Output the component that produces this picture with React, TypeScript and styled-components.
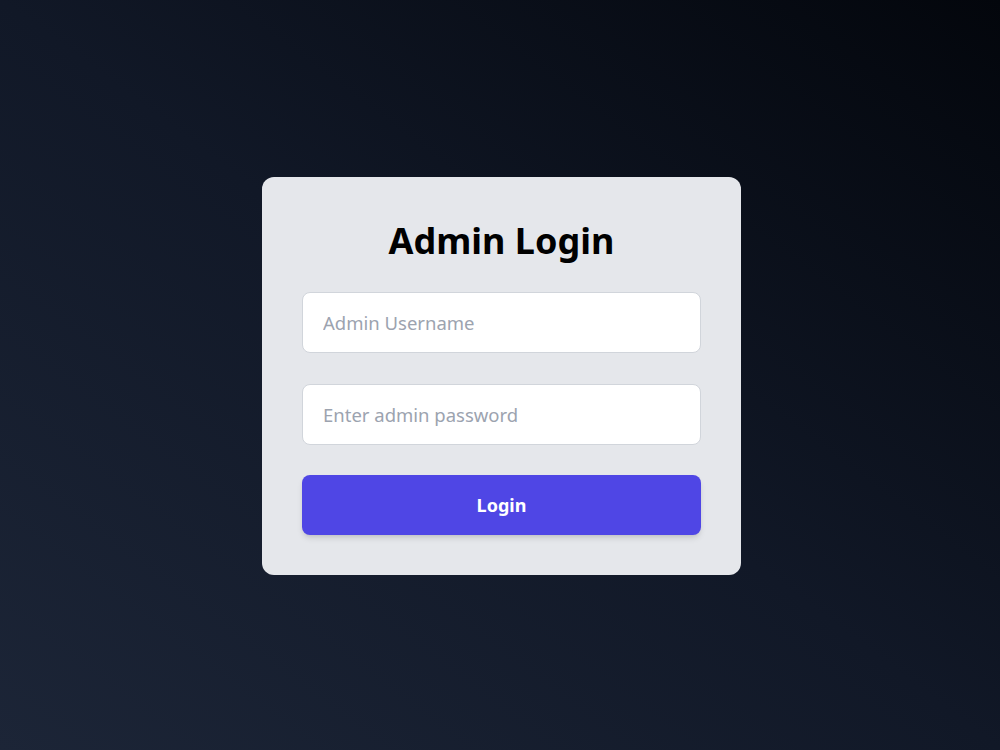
import React from "react";
import styled, { createGlobalStyle } from "styled-components";

const GlobalStyle = createGlobalStyle`
  html, body {
    margin: 0;
    padding: 0;
    height: 100%;
  }
  body {
    font-family: "Noto Sans", "Open Sans", sans-serif;
  }
  #root {
    height: 100%;
  }
  * {
    box-sizing: border-box;
  }
`;

const Page = styled.main`
  min-height: 100vh;
  padding: 2px 0 0 3px;
  display: flex;
  align-items: center;
  justify-content: center;
  background: linear-gradient(to top right, #1c2537 0%, #111827 50%, #03060c 100%);
`;

const Card = styled.form`
  width: 479px;
  padding: 40px;
  background: #e5e7eb;
  border-radius: 12px;
  display: flex;
  flex-direction: column;
`;

const Title = styled.h1`
  margin: 0 0 27px;
  font-size: 36px;
  line-height: 48px;
  font-weight: 700;
  color: #000;
  text-align: center;
`;

const Field = styled.input<{ $gap?: number }>`
  height: 61px;
  width: 100%;
  padding: 0 20px;
  border: 1px solid #d1d5db;
  border-radius: 8px;
  background: #fff;
  font-family: inherit;
  font-size: 18.5px;
  color: #111827;
  outline: none;
  margin-bottom: ${(p) => p.$gap ?? 31}px;

  &::placeholder {
    color: #9ca3af;
  }
`;

const SubmitButton = styled.button`
  height: 60px;
  width: 100%;
  border: none;
  border-radius: 8px;
  background: #4f46e5;
  color: #fff;
  font-family: inherit;
  font-size: 18px;
  font-weight: 700;
  cursor: pointer;
  box-shadow: 0 4px 6px -1px rgba(0, 0, 0, 0.12), 0 2px 4px -2px rgba(0, 0, 0, 0.1);
`;

export default function App() {
  return (
    <>
      <GlobalStyle />
      <Page>
        <Card onSubmit={(e) => e.preventDefault()}>
          <Title>Admin Login</Title>
          <Field type="text" placeholder="Admin Username" />
          <Field type="password" placeholder="Enter admin password" $gap={30} />
          <SubmitButton type="submit">Login</SubmitButton>
        </Card>
      </Page>
    </>
  );
}
